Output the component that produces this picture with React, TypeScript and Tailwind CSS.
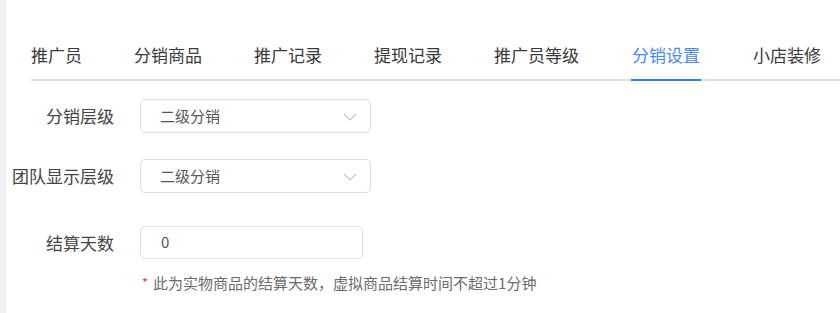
const TABS = ["推广员", "分销商品", "推广记录", "提现记录", "推广员等级", "分销设置", "小店装修"]

export default function App() {
  return (
    <div
      className="flex h-[313px] w-[840px] overflow-hidden bg-white"
      style={{ fontFamily: '"Noto Sans CJK SC", "Noto Sans", sans-serif' }}
    >
      {/* left gutter */}
      <div className="w-[6px] shrink-0 bg-[#eef0f4]" />

      <div className="flex-1">
        {/* Tabs */}
        <div className="ml-[25px] mt-[40px] flex gap-[52px] border-b-2 border-[#dfe2e8]">
          {TABS.map((t) => {
            const active = t === "分销设置"
            return (
              <div
                key={t}
                className={
                  active
                    ? "-mb-[2px] h-[41px] border-b-2 border-[#2d7ff0] px-px pt-[3px] text-[17px] leading-[24px] text-[#4a88f3]"
                    : "-mb-[2px] h-[41px] whitespace-nowrap border-b-2 border-transparent pt-[3px] text-[17px] leading-[24px] text-[#3a3a3a]"
                }
              >
                {t}
              </div>
            )
          })}
        </div>

        {/* Form */}
        <div className="mt-[18px] flex flex-col">
          <FormRow label="分销层级">
            <SelectBox value="二级分销" />
          </FormRow>
          <div className="mt-[26px]">
            <FormRow label="团队显示层级">
              <SelectBox value="二级分销" />
            </FormRow>
          </div>
          <div className="mt-[33px]">
            <FormRow label="结算天数">
              <div className="flex h-[33px] w-[223px] items-center rounded-[5px] border border-[#dcdfe6] pl-[20px] text-[15px] text-[#555]">
                0
              </div>
            </FormRow>
          </div>
          <div className="ml-[136px] mt-[14px] flex items-center text-[15px] leading-[20px] text-[#6b6b6b]">
            <span className="mr-[5px] text-[13px] text-[#f03c3c]">*</span>
            此为实物商品的结算天数，虚拟商品结算时间不超过1分钟
          </div>
        </div>
      </div>
    </div>
  )
}

function FormRow({ label, children }: { label: string; children: React.ReactNode }) {
  return (
    <div className="flex items-center">
      <div className="w-[108px] whitespace-nowrap text-right text-[17px] text-[#444]">{label}</div>
      <div className="ml-[26px]">{children}</div>
    </div>
  )
}

function SelectBox({ value }: { value: string }) {
  return (
    <div className="flex h-[34px] w-[231px] items-center justify-between rounded-[5px] border border-[#dcdfe6] pl-[19px] pr-[13px] text-[15px] text-[#555]">
      <span>{value}</span>
      <svg width="14" height="8" viewBox="0 0 14 8" fill="none" className="mt-[2px]">
        <path d="M1 1l6 6 6-6" stroke="#c0c4cc" strokeWidth="1.1" />
      </svg>
    </div>
  )
}
